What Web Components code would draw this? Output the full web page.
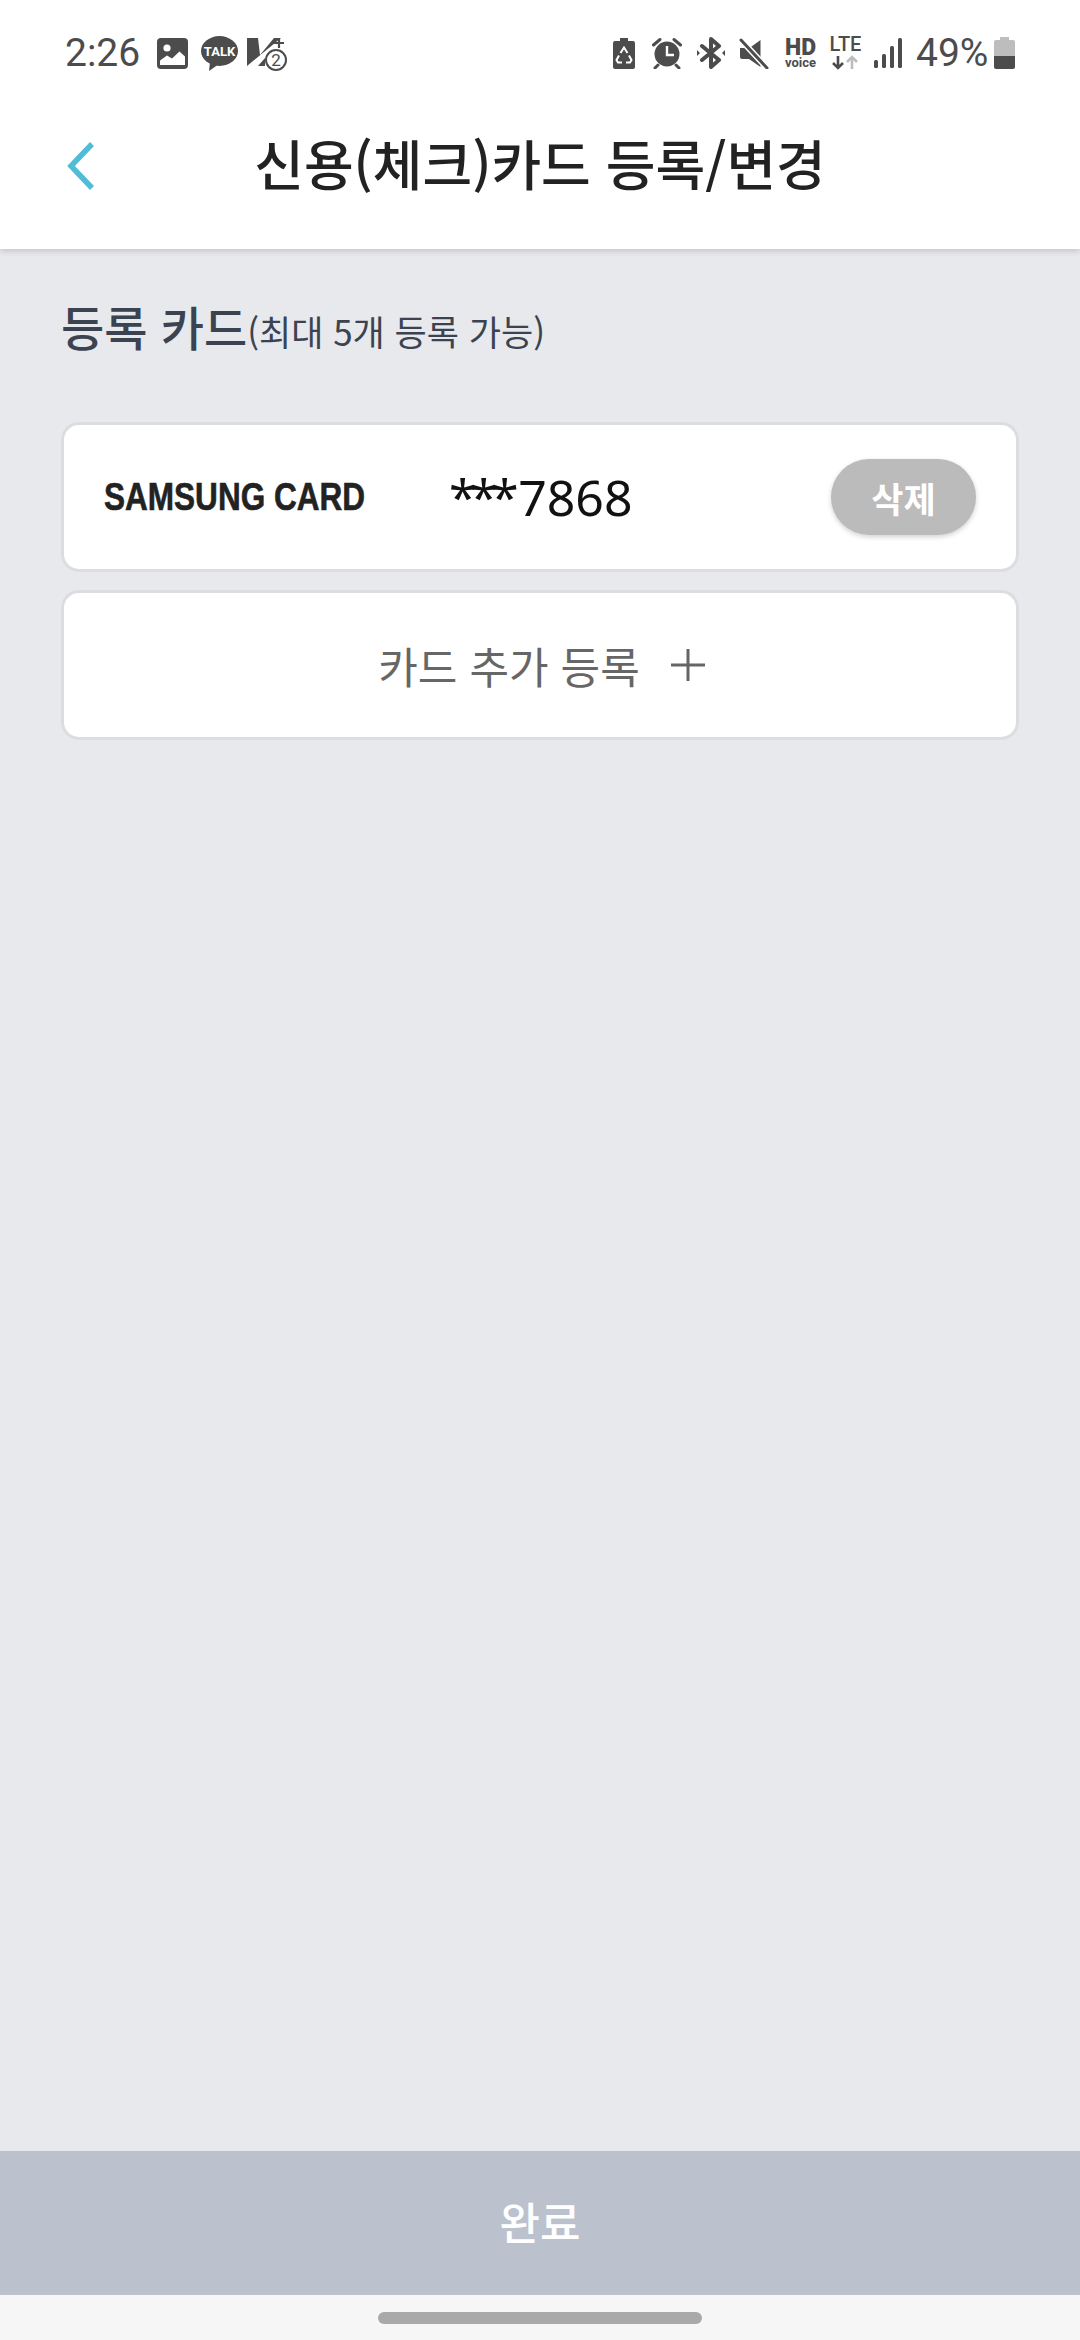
<!DOCTYPE html>
<html lang="ko">
<head>
<meta charset="utf-8">
<title>신용(체크)카드 등록/변경</title>
<style>
  html, body { margin: 0; height: 100%; }
  body { font-family: "Noto Sans CJK KR", "Noto Sans", sans-serif; background: #e7e9ed; }
  app-screen { height: 2340px; }
</style>
</head>
<body>
<app-screen>
  <status-bar slot="top"></status-bar>
  <app-header slot="top">신용(체크)카드 등록/변경</app-header>
  <section-title hint="(최대 5개 등록 가능)">등록 카드</section-title>
  <card-row brand="SAMSUNG CARD" stars="***" number="7868"></card-row>
  <add-card>카드 추가 등록</add-card>
  <done-button slot="bottom">완료</done-button>
  <home-bar slot="bottom"></home-bar>
</app-screen>

<script>
class AppScreen extends HTMLElement {
  constructor() {
    super();
    this.attachShadow({ mode: 'open' }).innerHTML = `
      <style>
        :host { display: flex; flex-direction: column; background: #e7e9ed; }
        .top { position: relative; z-index: 1; }
        .main { flex: 1; display: flex; flex-direction: column; padding: 52px 61px 0; gap: 18px; }
      </style>
      <div class="top"><slot name="top"></slot></div>
      <div class="main"><slot></slot></div>
      <div><slot name="bottom"></slot></div>`;
  }
}

class StatusBar extends HTMLElement {
  constructor() {
    super();
    const fg = '#4c4c4c';
    this.attachShadow({ mode: 'open' }).innerHTML = `
      <style>
        :host { display: flex; align-items: center; height: 106px; padding: 0 65px 0 65px; background: #fff; color: ${fg};
          font-family: "Roboto", "Liberation Sans", sans-serif; font-size: 39px; box-sizing: border-box; }
        .group { display: flex; align-items: center; }
        .spacer { flex: 1; }
        svg { display: block; flex: none; }
        span { line-height: 1; }
        .stack { display: flex; flex-direction: column; align-items: center; width: 33px; flex: none; white-space: nowrap; }
        .hd { font-size: 23px; font-weight: 900; line-height: 19px; }
        .voice { font-size: 13px; font-weight: 700; line-height: 12px; }
        .lte { font-size: 20px; font-weight: 500; line-height: 17px; }
      </style>
      <div class="group">
        <span style="width:92px">2:26</span>
        <svg width="31" height="31" viewBox="0 0 31 31"><rect width="31" height="31" rx="4" fill="${fg}"/><circle cx="10" cy="10" r="3.600" fill="#fff"/><path d="M3 27v-4.500l7-5 5 3 7.500-7 5.500 5v8.500z" fill="#fff"/></svg>
        <svg style="margin-left:13px" width="37" height="35" viewBox="0 0 37 35"><ellipse cx="18.500" cy="15" rx="18.500" ry="15" fill="${fg}"/><path d="M9 26l-1 9 10-7z" fill="${fg}"/><text x="18.500" y="20" text-anchor="middle" font-family="Roboto" font-weight="700" font-size="13" fill="#fff">TALK</text></svg>
        <svg style="margin-left:9px" width="40" height="36" viewBox="0 0 40 36"><path d="M0 3h11l2 17L27 3h7L0 31z" fill="${fg}"/><path d="M11 31l7-8v8z" fill="${fg}"/><path d="M32 3v10M27 8h10" stroke="${fg}" stroke-width="2.200"/><circle cx="29" cy="25" r="10" fill="#fff" stroke="${fg}" stroke-width="2"/><text x="29" y="31" text-anchor="middle" font-family="Roboto" font-size="17" fill="${fg}">2</text></svg>
      </div>
      <div class="spacer"></div>
      <div class="group">
        <svg width="22" height="32" viewBox="0 0 22 32"><path d="M7 1h8v3h5a2 2 0 0 1 2 2v24a2 2 0 0 1-2 2H2a2 2 0 0 1-2-2V6a2 2 0 0 1 2-2h5z" fill="${fg}"/><path d="M7.500 16l3.500-5.500 3.500 5.500M16 18.500l2.500 4.500-1.500 2.500h-4M9 25.500H5L3.500 23 6 18.500" fill="none" stroke="#fff" stroke-width="2"/></svg>
        <svg style="margin-left:17px" width="30" height="32" viewBox="0 0 30 32"><circle cx="15" cy="17" r="12.500" fill="${fg}"/><path d="M15 9v9h7" fill="none" stroke="#fff" stroke-width="2.400"/><path d="M1.500 8L8 2.500M28.500 8L22 2.500M6 28l-3 3M24 28l3 3" stroke="${fg}" stroke-width="3" stroke-linecap="round"/></svg>
        <svg style="margin-left:15px" width="28" height="32" viewBox="0 0 28 32"><path d="M5 9l17 14-8 7V2l8 7L5 23" fill="none" stroke="${fg}" stroke-width="4" stroke-linejoin="round" stroke-linecap="round"/><path d="M0 13l3 3-3 3zM28 13l-3 3 3 3z" fill="${fg}"/></svg>
        <svg style="margin-left:14px" width="30" height="32" viewBox="0 0 30 32"><path d="M1 11h6l3.500 0 11-8v27L10 22H3a2 2 0 0 1-2-2z" fill="${fg}"/><path d="M2 3l26 28" stroke="#fff" stroke-width="6"/><path d="M2 3l26 28" stroke="${fg}" stroke-width="3" stroke-linecap="round"/></svg>
        <div class="stack" style="margin-left:15px"><span class="hd">HD</span><span class="voice">voice</span></div>
        <div class="stack" style="margin-left:12px"><span class="lte">LTE</span>
          <svg width="33" height="17" viewBox="0 0 33 17"><path d="M9 3v12M4 10l5 5 5-5" fill="none" stroke="${fg}" stroke-width="2.600"/><path d="M23 16V4M18 9l5-5 5 5" fill="none" stroke="#bdbdbd" stroke-width="2.600"/></svg>
        </div>
        <svg style="margin-left:12px" width="28" height="32" viewBox="0 0 28 32"><g fill="${fg}"><rect y="23" width="4" height="8" rx="1.500"/><rect x="8" y="17" width="4" height="14" rx="1.500"/><rect x="16" y="9" width="4" height="22" rx="1.500"/><rect x="24" y="1" width="4" height="30" rx="1.500"/></g></svg>
        <span style="margin-left:14px;width:73px">49%</span>
        <svg style="margin-left:5px" width="21" height="32" viewBox="0 0 21 32"><path d="M6 0h9v3h4a2 2 0 0 1 2 2v14H0V5a2 2 0 0 1 2-2h4z" fill="#bdbdbd"/><path d="M0 19h21v11a2 2 0 0 1-2 2H2a2 2 0 0 1-2-2z" fill="${fg}"/></svg>
      </div>`;
  }
}

class AppHeader extends HTMLElement {
  constructor() {
    super();
    this.attachShadow({ mode: 'open' }).innerHTML = `
      <style>
        :host { display: flex; align-items: center; justify-content: center; position: relative; height: 143px; padding-bottom: 29px; box-sizing: border-box;
          background: #fff; box-shadow: 0 2px 6px rgba(0,0,0,.16); clip-path: inset(0 0 -12px 0);
          color: #222; font-size: 54px; font-weight: 500; line-height: 1; }
        svg { position: absolute; left: 66px; top: 36px; }
      </style>
      <svg width="30" height="48" viewBox="0 0 30 48"><path d="M26 2L5 24l21 22" fill="none" stroke="#4fbdd6" stroke-width="5.500"/></svg>
      <slot></slot>`;
  }
}

class SectionTitle extends HTMLElement {
  constructor() {
    super();
    this.attachShadow({ mode: 'open' }).innerHTML = `
      <style>
        :host { display: flex; align-items: baseline; color: #3c4350; height: 50px; margin-bottom: 53px; font-size: 47px; font-weight: 500; line-height: 50px; }
        span { font-size: 35px; font-weight: 400; }
      </style>
      <slot></slot><span></span>`;
  }
  connectedCallback() { this.shadowRoot.querySelector('span').textContent = this.getAttribute('hint') || ''; }
}

const cardBox = `
  box-sizing: border-box; height: 150px; background: #fff; border: 3px solid #dcdde0; border-radius: 18px;`;

class CardRow extends HTMLElement {
  constructor() {
    super();
    this.attachShadow({ mode: 'open' }).innerHTML = `
      <style>
        :host { display: flex; align-items: center; ${cardBox} padding: 0 40px 0 40px; }
        .brand { width: 345px; font-family: "Liberation Sans", sans-serif; font-weight: 700; font-size: 38px; color: #222; white-space: nowrap; }
        .brand b { display: inline-block; transform: scaleX(.83); transform-origin: left; -webkit-text-stroke: .6px #222; }
        .num { flex: 1; font-family: "Noto Sans", sans-serif; font-size: 50px; line-height: 60px; color: #111; }
        .stars { letter-spacing: -6.500px; margin-right: 6px; }
        button { width: 145px; height: 76px; border: 0; border-radius: 38px; padding: 0; background: #bbb; color: #fff; font: 700 35px "Noto Sans CJK KR", sans-serif;
          box-shadow: 0 2px 5px rgba(0,0,0,.18); }
      </style>
      <div class="brand"><b></b></div>
      <div class="num"><span class="stars"></span><span class="digits"></span></div>
      <button>삭제</button>`;
  }
  connectedCallback() {
    this.shadowRoot.querySelector('b').textContent = this.getAttribute('brand');
    this.shadowRoot.querySelector('.stars').textContent = this.getAttribute('stars');
    this.shadowRoot.querySelector('.digits').textContent = this.getAttribute('number');
  }
}

class AddCard extends HTMLElement {
  constructor() {
    super();
    this.attachShadow({ mode: 'open' }).innerHTML = `
      <style>
        :host { display: flex; align-items: center; justify-content: center; gap: 31px; ${cardBox} padding-left: 3px; color: #666; font-size: 43px; }
        svg { display: block; }
      </style>
      <slot></slot>
      <svg width="34" height="32" viewBox="0 0 34 32"><path d="M17 0v32M0 16h34" stroke="#666" stroke-width="3"/></svg>`;
  }
}

class DoneButton extends HTMLElement {
  constructor() {
    super();
    this.attachShadow({ mode: 'open' }).innerHTML = `
      <style>
        :host { display: flex; align-items: center; justify-content: center; height: 144px; padding-bottom: 4px; box-sizing: border-box; background: #bcc2cd; color: #fff; font-size: 44px; font-weight: 500; }
      </style>
      <slot></slot>`;
  }
}

class HomeBar extends HTMLElement {
  constructor() {
    super();
    this.attachShadow({ mode: 'open' }).innerHTML = `
      <style>
        :host { display: flex; justify-content: center; height: 45px; padding-top: 17px; box-sizing: border-box; background: #f6f6f6; }
        div { width: 324px; height: 12px; border-radius: 6px; background: #a9a9a9; }
      </style>
      <div></div>`;
  }
}

customElements.define('app-screen', AppScreen);
customElements.define('status-bar', StatusBar);
customElements.define('app-header', AppHeader);
customElements.define('section-title', SectionTitle);
customElements.define('card-row', CardRow);
customElements.define('add-card', AddCard);
customElements.define('done-button', DoneButton);
customElements.define('home-bar', HomeBar);
</script>
</body>
</html>
